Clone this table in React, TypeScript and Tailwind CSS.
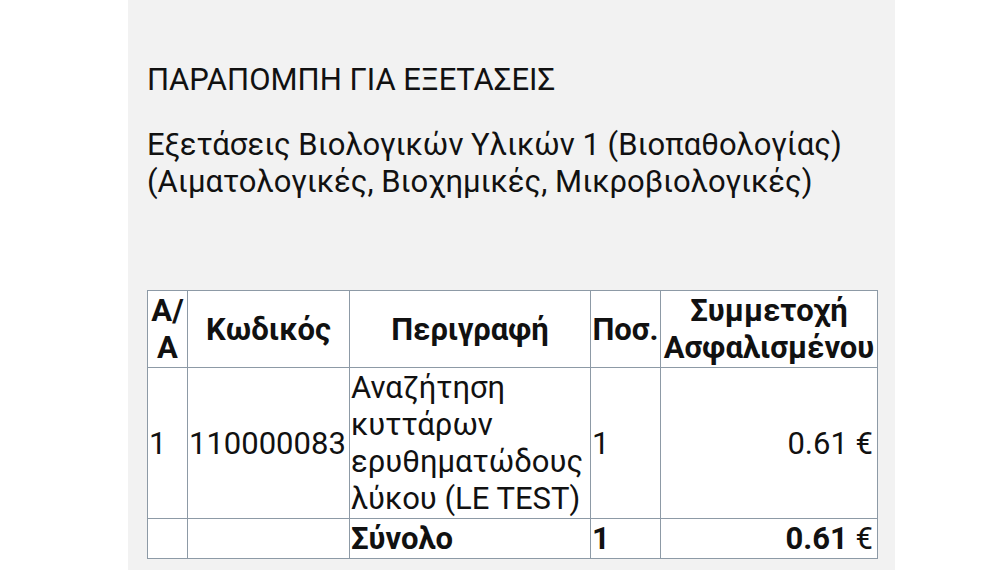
export default function App() {
  const cell = "border border-[#8d9aa6] p-px align-middle";
  return (
    <div className="w-[1000px] h-[570px] bg-white flex justify-start">
      <div
        className="ml-[128px] w-[767px] h-full bg-[#f2f2f2] pl-[19px] pr-[18px] pt-[61px] text-[31px] leading-[37px] text-[#111]"
        style={{ fontFamily: "Roboto, 'Noto Sans', sans-serif" }}
      >
        <div>ΠΑΡΑΠΟΜΠΗ ΓΙΑ ΕΞΕΤΑΣΕΙΣ</div>
        <div className="mt-[28px]">
          Εξετάσεις Βιολογικών Υλικών 1 (Βιοπαθολογίας)
          <br />
          (Αιματολογικές, Βιοχημικές, Μικροβιολογικές)
        </div>
        <table className="mt-[90px] w-[730px] table-fixed border-collapse bg-white border border-[#9fb1c4]">
          <colgroup>
            <col className="w-[40px]" />
            <col className="w-[162px]" />
            <col className="w-[241px]" />
            <col className="w-[70px]" />
            <col className="w-[217px]" />
          </colgroup>
          <thead>
            <tr className="font-bold text-center">
              <th className={cell}>Α/ Α</th>
              <th className={cell}>Κωδικός</th>
              <th className={cell}>Περιγραφή</th>
              <th className={`${cell} whitespace-nowrap`}>Ποσ.</th>
              <th className={`${cell} whitespace-nowrap`}>
                Συμμετοχή
                <br />
                Ασφαλισμένου
              </th>
            </tr>
          </thead>
          <tbody>
            <tr>
              <td className={cell}>1</td>
              <td className={cell}>110000083</td>
              <td className={cell}>Αναζήτηση κυττάρων ερυθηματώδους λύκου (LE TEST)</td>
              <td className={cell}>1</td>
              <td className={`${cell} text-right pr-[4px]`}>0.61 €</td>
            </tr>
            <tr>
              <td className={cell}></td>
              <td className={cell}></td>
              <td className={`${cell} font-bold`}>Σύνολο</td>
              <td className={`${cell} font-bold`}>1</td>
              <td className={`${cell} text-right pr-[4px]`}>
                <span className="font-bold">0.61</span> €
              </td>
            </tr>
          </tbody>
        </table>
      </div>
    </div>
  );
}
